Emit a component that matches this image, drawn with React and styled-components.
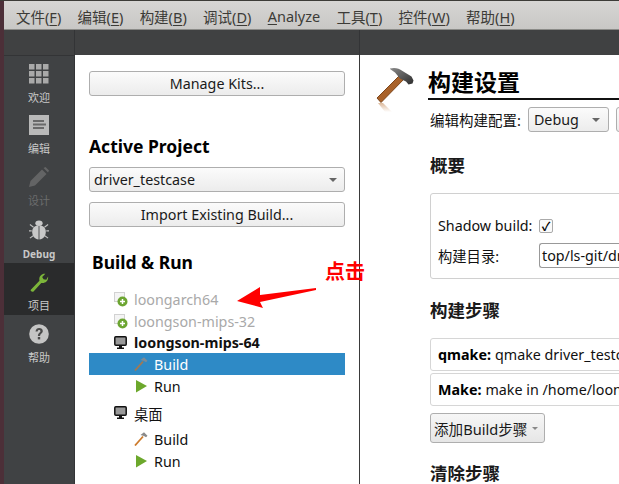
import React from "react";
import styled, { createGlobalStyle } from "styled-components";

const FONT = `"Noto Sans", "Noto Sans CJK SC", sans-serif`;

const Global = createGlobalStyle`
  html, body { margin: 0; padding: 0; background: #fff; }
  body { width: 619px; height: 484px; overflow: hidden; font-family: ${FONT}; }
  * { box-sizing: border-box; }
`;

const Shell = styled.div`
  position: relative; display: flex; width: 619px; height: 484px; overflow: hidden;
  border-top: 1px solid #3c3b37;
`;
const Strip = styled.div`width: 4px; flex: none; background: #4c2f38;`;
const Column = styled.div`flex: 1; min-width: 0; display: flex; flex-direction: column;`;

const MenuBar = styled.nav`
  height: 29px; flex: none; display: flex; align-items: center; padding: 2px 0 0 12px; gap: 16.3px;
  background: linear-gradient(#d6d5d3, #c8c7c5);
  font-size: 14.5px; color: #3c3b37; border-bottom: 1px solid #8b8b88;
`;
const MenuItem = styled.span`white-space: nowrap; u { text-underline-offset: 2px; }`;

const Toolbar = styled.div`height: 25px; flex: none; display: flex; background: #404142;`;
const ToolCell = styled.div`
  width: ${p => p.$w}px; flex: ${p => (p.$w ? "none" : "1")};
  border-right: 1px solid ${p => (p.$end ? "transparent" : "#333436")};
`;

const Workspace = styled.div`flex: 1; min-height: 0; display: flex;`;

const Sidebar = styled.aside`
  width: 71px; flex: none; background: #404244; border-top: 1px solid #333436;
  border-right: 1px solid #333436; padding-top: 2px; display: flex; flex-direction: column;
`;
const SideItem = styled.div`
  height: ${p => p.$h}px; flex: none; display: flex; flex-direction: column; align-items: center;
  justify-content: center; gap: 7px; padding-top: ${p => p.$pt ?? 2}px;
  background: ${p => (p.$active ? "#2a2b2c" : "transparent")};
  color: ${p => (p.$dim ? "#6b6c6d" : "#c8c8c8")};
  font-size: ${p => (p.$bold ? 10 : 11)}px; line-height: 14px; font-weight: ${p => (p.$bold ? 700 : 400)};
  svg { display: block; }
`;

const ProjectPanel = styled.section`
  width: 285px; flex: none; background: #fff; border-right: 1px solid #3a3a3a;
  padding: 16px 14px 0 14px; display: flex; flex-direction: column; color: #000;
`;
const PushButton = styled.div`
  height: 25px; flex: none; border: 1px solid #aeaeae; border-radius: 3px;
  background: linear-gradient(#fbfbfb, #ececec); display: flex; align-items: center; justify-content: center;
  font-size: 14.3px; color: #1a1a1a; margin-top: ${p => p.$mt || 0}px;
`;
const Combo = styled(PushButton)`justify-content: space-between; padding: 0 7px 0 4px;`;
const Caret = styled.span`
  width: 0; height: 0; border-left: 4px solid transparent; border-right: 4px solid transparent;
  border-top: 4px solid #666;
`;
const SmallCaret = styled(Caret)`
  border-left-width: 3px; border-right-width: 3px; border-top: 3px solid #888;
`;
const PanelTitle = styled.h2`
  margin: ${p => p.$mt}px 0 0 ${p => p.$ml || 0}px; font-size: 17.5px; line-height: 24px; font-weight: 700; color: #000;
`;
const Tree = styled.div`margin-top: 14px; display: flex; flex-direction: column;`;
const Row = styled.div`
  height: ${p => p.$h || 22}px; display: flex; align-items: center; padding-left: ${p => p.$in}px; gap: 6px;
  font-size: 14.3px; white-space: nowrap;
  font-weight: ${p => (p.$bold ? 700 : 400)};
  color: ${p => (p.$sel ? "#fff" : p.$dim ? "#a9a9a9" : "#111")};
  background: ${p => (p.$sel ? "#2e8ac6" : "transparent")};
  margin-top: ${p => p.$mt || 0}px;
  svg { flex: none; }
`;

const Settings = styled.main`flex: 1; min-width: 0; background: #fff; overflow: hidden; padding: 12px 0 0 16px; color: #111;`;
const Head = styled.div`display: flex; gap: 13px;`;
const HeadBody = styled.div`flex: 1; min-width: 0;`;
const Title = styled.h1`
  margin: 0; height: 33px; font-size: 23px; line-height: 30px; font-weight: 700; color: #000;
  border-bottom: 2px solid #111; white-space: nowrap;
`;
const ConfigRow = styled.div`
  display: flex; align-items: center; margin-top: 7px; gap: 7px; font-size: 14.5px; margin-left: 2px; white-space: nowrap;
`;
const SmallCombo = styled(Combo)`width: 81px; padding: 0 8px 0 5px;`;
const EdgeButton = styled(PushButton)`width: 20px;`;
const Content = styled.div`width: 320px; padding-left: 54px;`;
const Section = styled.h3`
  margin: ${p => p.$mt}px 0 0; font-size: 17.5px; line-height: 24px; font-weight: 700; color: #1a1a1a;
`;
const Group = styled.div`
  margin-top: 16px; width: 240px; height: 86px; border: 1px solid #d0d0d0; border-radius: 3px;
  padding: 19px 0 0 7px; font-size: 14.3px;
`;
const FormRow = styled.div`display: flex; align-items: center; height: 25px; margin-bottom: ${p => p.$mb || 0}px; white-space: nowrap;`;
const FormLabel = styled.span`width: 101px; flex: none;`;
const Check = styled.span`
  width: 14px; height: 14px; border: 1px solid #aaa; border-radius: 2px; display: flex; align-items: center; justify-content: center;
  font-size: 12px; font-weight: 700; color: #000; background: #fafafa;
`;
const PathInput = styled.div`
  flex: 1; height: 25px; border: 1px solid #999; border-radius: 3px; border-right: 0; padding-left: 2px; line-height: 24px; overflow: hidden;
`;
const StepCard = styled.div`
  width: 240px; height: 33px; margin-top: ${p => p.$mt}px; border: 1px solid #d6d6d6; border-radius: 3px; padding-left: 7px;
  display: flex; align-items: center; gap: 4px; font-size: 14.3px; white-space: nowrap; overflow: hidden;
  b { font-weight: 700; color: #000; }
`;
const AddButton = styled(PushButton)`
  width: 115px; height: 30px; margin-top: 7px; justify-content: flex-start; padding-left: 3px; gap: 5px;
  background: linear-gradient(#f6f6f6, #e6e6e6); white-space: nowrap; font-size: 14.6px;
`;

const Note = styled.div`position: absolute; left: 325px; top: 259px; font-size: 20px; line-height: 24px; font-weight: 700; color: #ff0000;`;
const NoteArrow = styled.svg`position: absolute; left: 234px; top: 286px;`;

const GridIcon = () => (
  <svg width="20" height="20" viewBox="0 0 20 20" fill="#a9a9a9">
    {[0, 7, 14].flatMap(y => [0, 7, 14].map(x => <rect key={`${x}${y}`} x={x} y={y} width="5.5" height="5.5" />))}
  </svg>
);
const EditIcon = () => (
  <svg width="20" height="20" viewBox="0 0 20 20">
    <rect width="20" height="20" fill="#b9b9b9" />
    <path d="M4 5h11v2H4zM4 8.5h13v2H4zM4 12h11v2H4z" fill="#6a6a6a" />
  </svg>
);
const PencilIcon = () => (
  <svg width="20" height="20" viewBox="0 0 20 20" fill="#636465">
    <path d="M0 20l1.5-6L13 2.5 17.5 7 6 18.5z" />
    <path d="M14.5 1l2-1L20 3.500l-1 2z" />
  </svg>
);
const BugIcon = () => (
  <svg width="20" height="20" viewBox="0 0 22 22">
    <g stroke="#c0c0c0" strokeWidth="1.200">
      <path d="M1 5l4 3M21 5l-4 3M0 12h3M22 12h-3M1 20l4-3M21 20l-4-3" />
    </g>
    <ellipse cx="11" cy="3.500" rx="4" ry="3" fill="#c8c8c8" />
    <path d="M10.500 6C6 6 3.500 9 3.500 13c0 5 3 8 7 8.500z" fill="#c8c8c8" />
    <path d="M11.500 6c4.500 0 7 3 7 7 0 5-3 8-7 8.500z" fill="#c8c8c8" />
  </svg>
);
const WrenchIcon = () => (
  <svg width="20" height="20" viewBox="0 0 20 22">
    <path d="M1 19.500L10.500 9.500C9.500 5.500 12.500 1.500 17 2L13.500 5.500 15 8l3 .5L20 5c.5 5-3.500 8-7.500 7L4 21.500c-1.500 1-4-.5-3-2z" fill="#7cb53a" />
  </svg>
);
const HelpIcon = () => (
  <svg width="20" height="20" viewBox="0 0 20 20">
    <circle cx="10" cy="10" r="9.800" fill="#c4c4c4" />
    <path d="M6.500 7.500C6.800 5 8.300 4 10.100 4c2.200 0 3.700 1.300 3.700 3.100 0 2.500-2.700 2.600-2.700 4.900H8.900c0-3.200 2.500-3.300 2.500-4.800 0-.8-.5-1.300-1.300-1.300-.9 0-1.300.6-1.500 1.600z" fill="#4a4a4a" />
    <rect x="8.800" y="13" width="2.400" height="2.400" fill="#4a4a4a" />
  </svg>
);
const KitIcon = () => (
  <svg width="14" height="15" viewBox="0 0 14 15">
    <rect x="0.500" y="0.500" width="10" height="9" fill="#f4f4f4" stroke="#d2d2d2" />
    <circle cx="8.500" cy="9.500" r="5" fill="#6ca531" />
    <path d="M8.500 7v5M6 9.500h5" stroke="#fff" strokeWidth="1.500" />
  </svg>
);
const MonitorIcon = () => (
  <svg width="14" height="14" viewBox="0 0 14 14">
    <rect x="0.800" y="0.800" width="11.400" height="8.500" rx="1" fill="#999" stroke="#111" strokeWidth="1.500" />
    <path d="M5 10h3v1.500h2V13H3v-1.500h2z" fill="#111" />
  </svg>
);
const MiniHammer = ({ faded }) => (
  <svg width="14" height="14" viewBox="0 0 14 14">
    <path d="M1 13.500L9 4.500" stroke={faded ? "#a5784f" : "#cc7a2b"} strokeWidth="1.800" />
    <path d="M6.500 3L10 0.300l3.500 3.500-1.500 1.500-2-1.200z" fill={faded ? "#7d8b96" : "#8a8a8a"} />
  </svg>
);
const RunIcon = () => (
  <svg width="13" height="14" viewBox="0 0 13 14">
    <path d="M1 1l11 6-11 6.500z" fill="#6ca82c" />
  </svg>
);
const BigHammer = () => (
  <svg width="39" height="46" viewBox="0 0 39 46" style={{ flex: "none" }}>
    <defs>
      <linearGradient id="reflect" x1="0" y1="0" x2="0" y2="1">
        <stop offset="0" stopColor="#dcb99b" />
        <stop offset="1" stopColor="#ffffff" />
      </linearGradient>
      <linearGradient id="steel" x1="0" y1="0" x2="1" y2="1">
        <stop offset="0" stopColor="#8a8a8a" />
        <stop offset="1" stopColor="#2c2c2c" />
      </linearGradient>
    </defs>
    <path d="M1 31L27 5l4 4L5 35.500z" fill="#a9622a" stroke="#7d461b" strokeWidth="1" />
    <path d="M14 1.500c5-1.500 9 0 12.500 2.500l9 5.500 2 4-1 3-4 1-2.500-3-6-3-5-6-5-3.500z" fill="url(#steel)" />
    <path d="M2 36l5 0 9 9H9z" fill="url(#reflect)" />
  </svg>
);

export default function App() {
  return (
    <>
      <Global />
      <Shell>
        <Strip />
        <Column>
          <MenuBar>
            <MenuItem>文件(<u>F</u>)</MenuItem>
            <MenuItem>编辑(<u>E</u>)</MenuItem>
            <MenuItem>构建(<u>B</u>)</MenuItem>
            <MenuItem>调试(<u>D</u>)</MenuItem>
            <MenuItem><u>A</u>nalyze</MenuItem>
            <MenuItem>工具(<u>T</u>)</MenuItem>
            <MenuItem>控件(<u>W</u>)</MenuItem>
            <MenuItem>帮助(<u>H</u>)</MenuItem>
          </MenuBar>
          <Toolbar>
            <ToolCell $w={71} />
            <ToolCell $w={285} />
            <ToolCell $end />
          </Toolbar>
          <Workspace>
            <Sidebar>
              <SideItem $h={50}><GridIcon />欢迎</SideItem>
              <SideItem $h={53}><EditIcon />编辑</SideItem>
              <SideItem $h={50} $dim><PencilIcon />设计</SideItem>
              <SideItem $h={52} $pt={6} $bold><BugIcon />Debug</SideItem>
              <SideItem $h={52} $pt={6} $active><WrenchIcon />项目</SideItem>
              <SideItem $h={52} $pt={6}><HelpIcon />帮助</SideItem>
            </Sidebar>
            <ProjectPanel>
              <PushButton>Manage Kits...</PushButton>
              <PanelTitle $mt={38}>Active Project</PanelTitle>
              <Combo $mt={9}>driver_testcase<Caret /></Combo>
              <PushButton $mt={10}>Import Existing Build...</PushButton>
              <PanelTitle $mt={23} $ml={3}>Build &amp; Run</PanelTitle>
              <Tree>
                <Row $in={25} $dim><KitIcon />loongarch64</Row>
                <Row $in={25} $dim><KitIcon />loongson-mips-32</Row>
                <Row $in={25} $bold $h={21}><MonitorIcon />loongson-mips-64</Row>
                <Row $in={45} $sel><MiniHammer faded />Build</Row>
                <Row $in={46}><RunIcon />Run</Row>
                <Row $in={25} $mt={5}><MonitorIcon />桌面</Row>
                <Row $in={45} $mt={4}><MiniHammer />Build</Row>
                <Row $in={46}><RunIcon />Run</Row>
              </Tree>
            </ProjectPanel>
            <Settings>
              <Head>
                <BigHammer />
                <HeadBody>
                  <Title>构建设置</Title>
                  <ConfigRow>
                    编辑构建配置:
                    <SmallCombo>Debug<Caret /></SmallCombo>
                    <EdgeButton />
                  </ConfigRow>
                </HeadBody>
              </Head>
              <Content>
                <Section $mt={21}>概要</Section>
                <Group>
                  <FormRow $mb={5}>
                    <FormLabel>Shadow build:</FormLabel>
                    <Check>✓</Check>
                  </FormRow>
                  <FormRow>
                    <FormLabel>构建目录:</FormLabel>
                    <PathInput>top/ls-git/driver</PathInput>
                  </FormRow>
                </Group>
                <Section $mt={19}>构建步骤</Section>
                <StepCard $mt={16}><b>qmake:</b> qmake driver_testcase.pro</StepCard>
                <StepCard $mt={2}><b>Make:</b> make in /home/loongson</StepCard>
                <AddButton>添加Build步骤<SmallCaret /></AddButton>
                <Section $mt={18}>清除步骤</Section>
              </Content>
            </Settings>
          </Workspace>
        </Column>
        <Note>点击</Note>
        <NoteArrow width="84" height="24" viewBox="0 0 84 24">
          <path d="M3 14L26 0l0 8L82 1l0 2L26 15l3 6z" fill="#ff0000" />
        </NoteArrow>
      </Shell>
    </>
  );
}
